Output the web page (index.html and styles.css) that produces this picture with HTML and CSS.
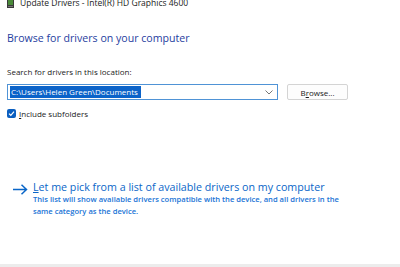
FILE: index.html
```html
<!DOCTYPE html>
<html lang="en">
<head>
    <meta charset="UTF-8">
    <title>Update Drivers</title>
    <link rel="stylesheet" href="styles.css">
</head>
<body>
    <div class="wizard">
        <div class="title-bar">
            <svg class="title-icon" width="7" height="9" viewBox="0 0 7 9">
                <rect x="0" y="0" width="7" height="9" fill="#3a3a3a"/>
                <rect x="1" y="1" width="5" height="5" fill="#4a8a3a"/>
                <rect x="1" y="7" width="5" height="1" fill="#777"/>
            </svg>
            <span>Update Drivers - Intel(R) HD Graphics 4600</span>
        </div>

        <div class="content">
            <h1 class="heading">Browse for drivers on your computer</h1>

            <div class="field">
                <label class="field-label">Search for drivers in this location:</label>
                <div class="path-row">
                    <div class="combo">
                        <span class="combo-text">C:\Users\Helen Green\Documents</span>
                        <svg class="chevron" width="8" height="5" viewBox="0 0 8 5">
                            <path d="M0.5 0.5 L4 4 L7.5 0.5" fill="none" stroke="#777" stroke-width="1"/>
                        </svg>
                    </div>
                    <button class="browse-btn">B<u>r</u>owse...</button>
                </div>
                <label class="check-row">
                    <span class="checkbox">
                        <svg width="9" height="9" viewBox="0 0 9 9">
                            <path d="M2 4.6 L3.8 6.3 L7 2.6" fill="none" stroke="#fff" stroke-width="1.2"/>
                        </svg>
                    </span>
                    <span><u>I</u>nclude subfolders</span>
                </label>
            </div>

            <div class="option">
                <svg class="arrow" width="15" height="11" viewBox="0 0 15 11">
                    <path d="M0 5.5 H13.5 M8.5 0.8 L13.5 5.5 L8.5 10.2" fill="none" stroke="#0a66c8" stroke-width="1.5"/>
                </svg>
                <div class="option-text">
                    <div class="option-title"><u>L</u>et me pick from a list of available drivers on my computer</div>
                    <div class="option-desc">This list will show available drivers compatible with the device, and all drivers in the same category as the device.</div>
                </div>
            </div>
        </div>

        <div class="footer"></div>
    </div>
</body>
</html>
```

FILE: styles.css
```css
html, body {
    margin: 0;
    padding: 0;
}
body {
    width: 400px;
    height: 267px;
    overflow: hidden;
    background-color: #fff;
    font-family: 'Open Sans', 'Noto Sans', Arial, sans-serif;
    color: #1a1a1a;
}
.wizard {
    height: 267px;
    display: flex;
    flex-direction: column;
}
.title-bar {
    display: flex;
    align-items: center;
    gap: 6px;
    height: 8px;
    padding-left: 7px;
    font-size: 8.5px;
    line-height: 8px;
    color: #222;
    margin-top: -1px;
}
.title-icon {
    flex-shrink: 0;
}
.content {
    flex: 1;
    padding: 0 7px;
}
.heading {
    margin: 23px 0 0;
    font-size: 10.6px;
    font-weight: normal;
    color: #1f40a0;
    line-height: 16px;
}
.field {
    margin-top: 20px;
}
.field-label {
    display: block;
    font-size: 8px;
    line-height: 11px;
    color: #1a1a1a;
}
.path-row {
    display: flex;
    align-items: center;
    margin-top: 7px;
}
.combo {
    width: 271px;
    height: 16px;
    box-sizing: border-box;
    border: 1px solid #4f93d6;
    display: flex;
    align-items: center;
    padding: 0 2px;
}
.combo-text {
    flex: 1;
    font-size: 8px;
    line-height: 12px;
    background: linear-gradient(#0b63c9, #0b63c9) no-repeat 0 0 / 131px 100%;
    color: #fff;
    padding-left: 1px;
}
.chevron {
    margin-right: 2px;
}
.browse-btn {
    margin-left: 9px;
    width: 61px;
    height: 16px;
    box-sizing: border-box;
    border: 1px solid #d4d4d4;
    border-radius: 2px;
    background: #fdfdfd;
    font-family: inherit;
    font-size: 8px;
    color: #1a1a1a;
    padding: 0;
}
.check-row {
    display: flex;
    align-items: center;
    gap: 3px;
    margin-top: 8px;
    font-size: 8px;
    color: #1a1a1a;
}
.checkbox {
    width: 9px;
    height: 9px;
    border-radius: 2px;
    background: #0b5fc0;
    display: flex;
}
.option {
    display: flex;
    align-items: flex-start;
    margin-top: 61px;
    padding-left: 6px;
    gap: 5px;
}
.arrow {
    margin-top: 4px;
    flex-shrink: 0;
}
.option-title {
    font-size: 10.7px;
    line-height: 14px;
    color: #0a66c8;
}
.option-desc {
    margin-top: -1px;
    font-size: 7.6px;
    line-height: 12px;
    font-weight: 600;
    color: #1a74d6;
    width: 318px;
}
.footer {
    height: 3px;
    background: #ececec;
}
```
